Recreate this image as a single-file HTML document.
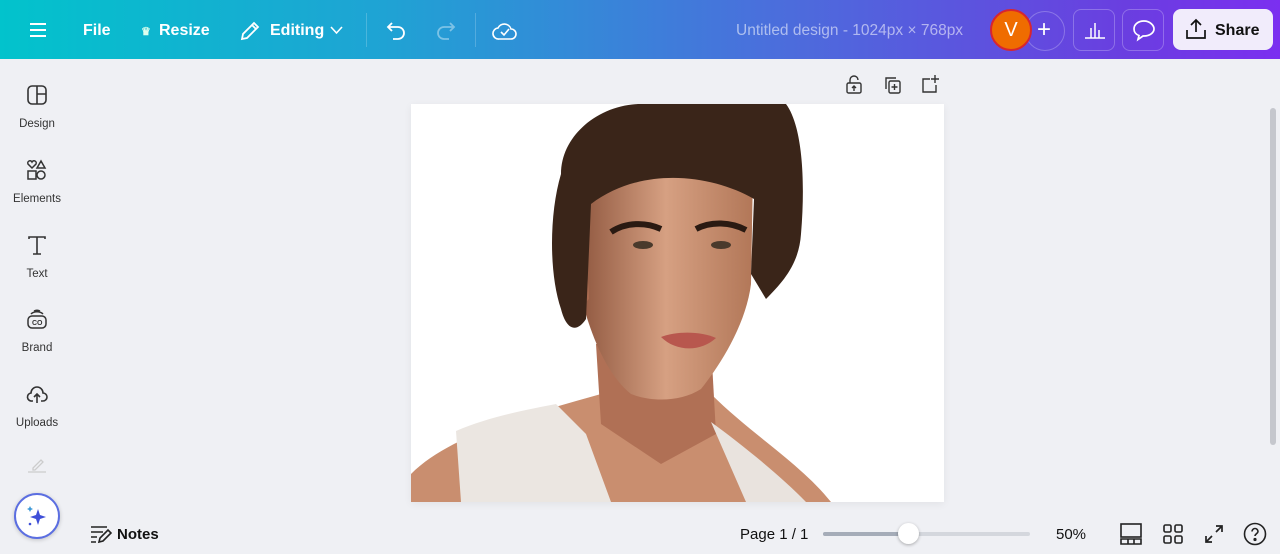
<!DOCTYPE html>
<html><head><meta charset="utf-8"><style>
*{margin:0;padding:0;box-sizing:border-box}
body{width:1280px;height:554px;overflow:hidden;background:#eff0f4;font-family:"Liberation Sans",sans-serif;position:relative}
.top{position:absolute;left:0;top:0;width:1280px;height:59px;background:linear-gradient(90deg,#02c3cc 0%,#1fa3d4 30%,#4a6fdc 60%,#6a3ee0 88%,#7b2ff0 100%)}
.t{position:absolute;color:#fff;font-size:16px;font-weight:bold;top:22px}
.sep{position:absolute;top:13px;width:1px;height:34px;background:rgba(255,255,255,.2)}
.sq{position:absolute;top:9px;width:42px;height:42px;border:1px solid rgba(255,255,255,.25);border-radius:8px}
.side{position:absolute;left:0;top:59px;width:74px;height:495px;background:#eff0f4}
.si{position:absolute;left:0;width:74px;text-align:center;font-size:11.5px;color:#333}
.si svg{display:block;margin:0 auto 12px}
.bt{position:absolute;font-size:15px;color:#111;top:526px}
</style></head><body>
<div class="top">
<svg style="position:absolute;left:29px;top:22px" width="18" height="16"><path d="M1 2h16M1 8h16M1 14h16" stroke="#fff" stroke-width="2"/></svg>
<div class="t" style="left:83px">File</div>
<div class="t" style="left:141px;font-size:11px;top:25px;color:#dfe">♛</div>
<div class="t" style="left:159px">Resize</div>
<svg style="position:absolute;left:239px;top:20px" width="22" height="22" fill="none" stroke="#fff" stroke-width="1.8"><path d="M3 19l1-5L15 3l4 4L8 18z M13 5l4 4"/></svg>
<div class="t" style="left:270px">Editing</div>
<svg style="position:absolute;left:330px;top:26px" width="13" height="9"><path d="M1 1l5.5 6L12 1" stroke="#fff" stroke-width="1.6" fill="none"/></svg>
<div class="sep" style="left:366px"></div>
<svg style="position:absolute;left:385px;top:20px" width="24" height="22" fill="none" stroke="#fff" stroke-width="1.8"><path d="M7 3L3 7l4 4M3 7h10a6 6 0 010 12H8"/></svg>
<svg style="position:absolute;left:433px;top:20px" width="24" height="22" fill="none" stroke="rgba(255,255,255,.4)" stroke-width="1.8"><path d="M17 3l4 4-4 4M21 7H11a6 6 0 000 12h5"/></svg>
<div class="sep" style="left:475px"></div>
<svg style="position:absolute;left:492px;top:20px" width="26" height="22" fill="none" stroke="#fff" stroke-width="1.6"><path d="M7 19h12a5 5 0 000-10 7 7 0 00-13-1 5.5 5.5 0 001 11z M9 12l3 3 5-6"/></svg>
<div class="t" style="left:736px;font-weight:normal;color:rgba(255,255,255,.55);font-size:15.5px">Untitled design - 1024px × 768px</div>
<div style="position:absolute;left:1025px;top:11px;width:40px;height:40px;border-radius:50%;border:1px solid rgba(255,255,255,.25)"></div>
<div class="t" style="left:1037px;font-size:24px;font-weight:normal;top:16px">+</div>
<div style="position:absolute;left:990px;top:9px;width:42px;height:42px;border-radius:50%;background:#ef6c00;border:2px solid #d8252f;color:#fff;font-size:20px;text-align:center;line-height:39px">V</div>
<div class="sq" style="left:1073px"></div>
<svg style="position:absolute;left:1084px;top:20px" width="22" height="20" fill="none" stroke="#fff" stroke-width="1.5"><path d="M1 18h20M7 18V8M11 18V3M15 18V10"/></svg>
<div class="sq" style="left:1122px"></div>
<svg style="position:absolute;left:1132px;top:19px" width="24" height="24" fill="none" stroke="#fff" stroke-width="1.7"><path d="M12 2C6 2 2 5.5 2 10c0 3 2 5.5 5 6.5l-1 4 5-3.5h1c6 0 10-3.5 10-7S18 2 12 2z"/></svg>
<div style="position:absolute;left:1173px;top:9px;width:100px;height:41px;background:#f1ecfb;border-radius:8px"></div>
<svg style="position:absolute;left:1185px;top:18px" width="22" height="22" fill="none" stroke="#111" stroke-width="1.7"><path d="M11 14V2M6 7l5-5 5 5M2 12v8h18v-8"/></svg>
<div class="t" style="left:1215px;color:#111">Share</div>
</div>

<div class="side">
<div class="si" style="top:25px"><svg width="22" height="22" fill="none" stroke="#333" stroke-width="1.6"><rect x="2" y="2" width="18" height="18" rx="4"/><path d="M11 2v18M11 10h9"/></svg>Design</div>
<div class="si" style="top:100px"><svg width="22" height="22" fill="none" stroke="#333" stroke-width="1.5"><path d="M6 9L2 5a2 2 0 014-2 2 2 0 014 2zM15 2l4 7h-8z"/><rect x="2" y="12" width="8" height="8"/><circle cx="15" cy="16" r="4"/></svg>Elements</div>
<div class="si" style="top:175px"><svg width="22" height="22" fill="none" stroke="#333" stroke-width="1.6"><path d="M3 5V3h16v2M11 3v17M7 20h8"/></svg>Text</div>
<div class="si" style="top:249px"><svg width="22" height="22" fill="none" stroke="#333" stroke-width="1.5"><rect x="2" y="8" width="18" height="12" rx="4"/><path d="M5 6c3-3 9-3 12 0M8 3c2-1 4-1 6 0"/><text x="6" y="17" font-size="7" fill="#333" stroke="none" font-weight="bold">CO</text></svg>Brand</div>
<div class="si" style="top:324px"><svg width="22" height="22" fill="none" stroke="#333" stroke-width="1.6"><path d="M7 18H6a4 4 0 01-1-8 6 6 0 0112 0 4 4 0 010 8h-2M11 20v-9M8 14l3-3 3 3"/></svg>Uploads</div>
<svg style="position:absolute;left:27px;top:398px" width="20" height="16" fill="none" stroke="#ccc" stroke-width="1.3"><path d="M6 11l8-8 2 2-8 8H6zM1 15h18"/></svg>
<div style="position:absolute;left:14px;top:434px;width:46px;height:46px;border-radius:50%;background:#fff;border:2.5px solid #5b6ee1;box-shadow:0 1px 4px rgba(0,0,0,.2)"></div>
<svg style="position:absolute;left:25px;top:445px" width="24" height="24"><path d="M13 5l2 6 6 2-6 2-2 6-2-6-6-2 6-2z" fill="#3f4fd8"/><path d="M5 2l1 2 2 1-2 1-1 2-1-2-2-1 2-1z" fill="#3f9ad8"/><circle cx="5" cy="20" r="1.3" fill="#3f4fd8"/></svg>
</div>

<svg style="position:absolute;left:845px;top:75px" width="18" height="20" fill="none" stroke="#333" stroke-width="1.4"><rect x="2" y="8" width="14" height="10" rx="1.5"/><path d="M5 8V5a4 4 0 018 0M9 16v-5M7 13l2-2 2 2"/></svg>
<svg style="position:absolute;left:883px;top:76px" width="20" height="20" fill="none" stroke="#333" stroke-width="1.4"><path d="M13 2H3v11"/><rect x="6" y="5" width="11" height="12" rx="1.5"/><path d="M11.5 8v6M8.5 11h6"/></svg>
<svg style="position:absolute;left:920px;top:74px" width="20" height="20" fill="none" stroke="#333" stroke-width="1.4"><path d="M10 5H3v13h13v-7M15 1v8M11 5h8"/></svg>

<div style="position:absolute;left:411px;top:104px;width:533px;height:398px;background:#fff;box-shadow:0 2px 8px rgba(0,0,0,.06);overflow:hidden">
<svg width="533" height="398">
<defs><linearGradient id="sk" x1="0" y1="0" x2="1" y2="0"><stop offset="0" stop-color="#8f573f"/><stop offset=".5" stop-color="#d6a082"/><stop offset="1" stop-color="#b27758"/></linearGradient></defs>
<path d="M0,370 C40,330 120,310 190,290 L300,290 C340,330 390,360 420,398 L0,398Z" fill="#c98e6f"/>
<path d="M185,240 L300,240 L305,330 L250,360 L190,320 Z" fill="#b07055"/>
<path d="M168,68 L342,68 L340,180 C335,220 310,260 290,285 C270,298 240,298 220,290 C195,270 180,230 172,200 Z" fill="url(#sk)"/>
<path d="M160,160 C170,150 178,165 178,195 L168,205 C160,195 156,175 160,160Z" fill="#a86a4f"/>
<path d="M150,70 C150,30 190,0 230,0 L375,0 C390,20 395,70 390,130 C388,160 372,178 355,195 L340,170 L343,95 C300,70 230,62 180,100 L175,215 C165,230 155,225 150,205 C138,170 138,110 150,70Z" fill="#3a2519"/>
<path d="M200,128 C215,118 235,118 250,125 M285,125 C300,117 320,118 335,126" stroke="#2a1a12" stroke-width="6" fill="none"/>
<ellipse cx="232" cy="141" rx="10" ry="4" fill="#4a3a2c"/><ellipse cx="310" cy="141" rx="10" ry="4" fill="#4a3a2c"/>
<path d="M250,233 C265,227 290,227 305,234 C290,248 265,248 250,233Z" fill="#b8574e"/>
<path d="M45,327 C80,312 120,305 145,300 L175,330 L200,398 L50,398 Z" fill="#ebe6e1"/>
<path d="M300,318 C330,340 370,372 395,398 L335,398 Z" fill="#e9e3de"/>
</svg></div>

<div style="position:absolute;left:1270px;top:108px;width:6px;height:337px;background:#c5c7cd;border-radius:3px"></div>

<svg style="position:absolute;left:90px;top:524px" width="22" height="20" fill="none" stroke="#222" stroke-width="1.6"><path d="M1 3h16M1 8h12M1 13h6M1 18h5M9 18l1-4 8-8 3 3-8 8z"/></svg>
<div class="bt" style="left:117px;font-weight:bold">Notes</div>
<div class="bt" style="left:740px">Page 1 / 1</div>
<div style="position:absolute;left:823px;top:532px;width:207px;height:4px;background:#d4d7dd;border-radius:2px"></div>
<div style="position:absolute;left:823px;top:532px;width:86px;height:4px;background:#a5acb8;border-radius:2px"></div>
<div style="position:absolute;left:898px;top:523px;width:21px;height:21px;border-radius:50%;background:#fff;box-shadow:0 1px 3px rgba(0,0,0,.3)"></div>
<div class="bt" style="left:1056px">50%</div>
<svg style="position:absolute;left:1120px;top:523px" width="22" height="22" fill="none" stroke="#222" stroke-width="1.6"><rect x="1" y="1" width="20" height="13"/><path d="M1 16h20v5H1zM8 16v5M14 16v5"/></svg>
<svg style="position:absolute;left:1163px;top:524px" width="20" height="20" fill="none" stroke="#222" stroke-width="1.6"><rect x="1" y="1" width="7" height="7" rx="1.5"/><rect x="12" y="1" width="7" height="7" rx="1.5"/><rect x="1" y="12" width="7" height="7" rx="1.5"/><rect x="12" y="12" width="7" height="7" rx="1.5"/></svg>
<svg style="position:absolute;left:1204px;top:524px" width="20" height="20" fill="none" stroke="#222" stroke-width="1.7"><path d="M12 2h6v6M18 2l-6 6M8 18H2v-6M2 18l6-6"/></svg>
<svg style="position:absolute;left:1243px;top:522px" width="24" height="24" fill="none" stroke="#222" stroke-width="1.6"><circle cx="12" cy="12" r="10.5"/><path d="M9 9.5a3 3 0 016 0c0 2-3 2.2-3 4.5"/><circle cx="12" cy="17.5" r=".8" fill="#222"/></svg>
</body></html>
